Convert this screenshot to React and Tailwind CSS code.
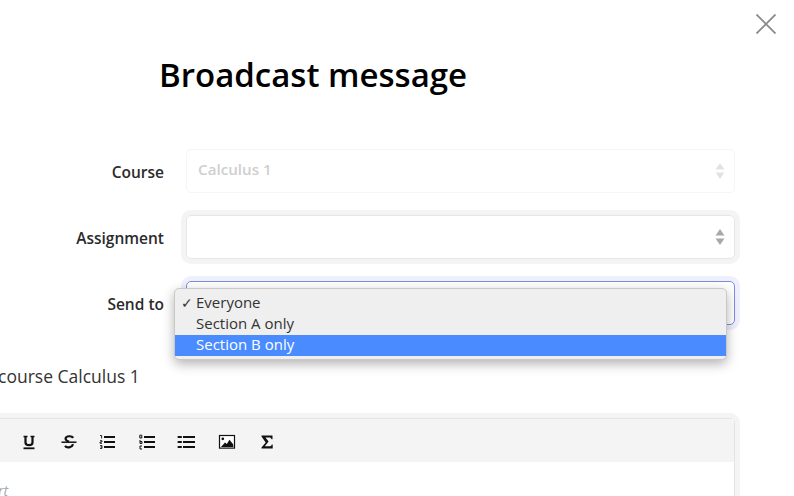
const font = { fontFamily: '"Open Sans", sans-serif' };

function Arrows({ color }) {
  return (
    <svg width="10" height="16" viewBox="0 0 10 16" className={color}>
      <path d="M5 0 L9.5 6.5 H0.5 Z" fill="currentColor" />
      <path d="M5 16 L9.5 9.5 H0.5 Z" fill="currentColor" />
    </svg>
  );
}

function Row({ label, children }) {
  return (
    <div className="flex items-center gap-[22px]">
      <label className="w-[164px] text-right text-[15.5px] font-semibold text-[#2b2b2b] pt-[3px]">{label}</label>
      {children}
    </div>
  );
}

function Toolbar() {
  const cls = 'w-[20px] h-[20px] text-[#111]';
  return (
    <div className="flex items-center h-[43px] bg-[#f4f4f4] pl-[38px] pt-[2px] gap-[19.6px]">
      <svg viewBox="0 0 20 20" className={cls} fill="none" stroke="currentColor">
        <path d="M6.5 4.5 V10.5 C6.5 14 13.5 14 13.5 10.5 V4.5" strokeWidth="2.2" />
        <path d="M4.5 4.5 H8.5 M11.5 4.5 H15.5" strokeWidth="1.3" />
        <path d="M4.5 16.3 H15.5" strokeWidth="1.8" />
      </svg>
      <svg viewBox="0 0 20 20" className={cls} fill="none" stroke="currentColor">
        <path d="M14 6 C13 3.6 7 3.6 6.6 6.5 C6.4 8 8 9 10 9.8" strokeWidth="2.2" />
        <path d="M13.6 12 C14.4 15 8 16.6 6 13.8" strokeWidth="2.2" />
        <path d="M2.5 10.2 H17.5" strokeWidth="1.5" />
      </svg>
      <svg viewBox="0 0 20 20" className={cls} fill="none" stroke="currentColor">
        <path d="M6 5 H17 M6 10 H17 M6 15 H17" strokeWidth="2" />
        <path d="M2 3.5 H3.6 V6.5 M2 8.7 H4 V10 H2 V11.3 H4 M2 13.6 H4 V16.4 H2 M2.6 15 H4" strokeWidth="0.9" />
      </svg>
      <svg viewBox="0 0 20 20" className={cls} fill="none" stroke="currentColor">
        <path d="M6 5 H17 M6 10 H17 M6 15 H17" strokeWidth="2" />
        <path d="M1.8 3.2 H3.8 V6 H1.8 Z M2 8 V11.4 H4 V9.6 H2 M4 14 H2 V17 H4" strokeWidth="1" />
      </svg>
      <svg viewBox="0 0 20 20" className={cls} fill="none" stroke="currentColor">
        <path d="M6 5 H18 M6 10 H18 M6 15 H18" strokeWidth="2" />
        <path d="M1.5 5 H4 M1.5 10 H4 M1.5 15 H4" strokeWidth="2.2" strokeLinecap="round" />
      </svg>
      <svg viewBox="0 0 20 20" className={cls}>
        <rect x="2.5" y="3.5" width="15" height="12.6" fill="#fff" stroke="currentColor" strokeWidth="1.2" />
        <circle cx="5.8" cy="6.8" r="1.4" fill="currentColor" />
        <path d="M4 15 L8 10.5 L9.8 12 L12.5 7.8 L16.3 12.5 V15 Z" fill="currentColor" />
      </svg>
      <svg viewBox="0 0 20 20" className={cls}>
        <path d="M4.5 3.5 H15.5 V7.2 H14.5 C14.2 5.9 13.6 5.4 12 5.4 H8.4 L11.6 9.6 L7.8 14.3 H12.4 C13.8 14.3 14.5 13.7 14.8 12.5 H15.7 V16.5 H4.5 V15.6 L8.7 10.4 L4.5 4.4 Z" fill="currentColor" />
      </svg>
    </div>
  );
}

export default function App() {
  return (
    <div className="relative w-[794px] h-[496px] overflow-hidden bg-white" style={font}>
      <div className="flex justify-end pt-[14px] pr-[18px]">
        <svg width="20" height="20" viewBox="0 0 20 20" stroke="#8a8a8a" strokeWidth="1.8">
          <path d="M0.5 0.5 L19.5 19.5 M19.5 0.5 L0.5 19.5" />
        </svg>
      </div>

      <h1 className="pl-[159px] mt-[18px] text-[33px] leading-[46px] font-semibold text-black">Broadcast message</h1>

      <div className="flex flex-col gap-[22px] mt-[51px]">
        <Row label="Course">
          <div className="flex items-center justify-between w-[549px] h-[44px] pl-[11px] pr-[9px] rounded-[5px] border border-[#f5f5f5]">
            <span className="text-[15.2px] font-semibold text-[#cfcfcf] -mt-[3px]">Calculus 1</span>
            <Arrows color="text-[#e3e3e3]" />
          </div>
        </Row>
        <Row label="Assignment">
          <div className="flex items-center justify-end w-[549px] h-[44px] pr-[9px] rounded-[5px] border border-[#e6e6e6] ring-[5px] ring-[#f4f4f4]">
            <Arrows color="text-[#a8a8a8]" />
          </div>
        </Row>
        <Row label="Send to">
          <div className="w-[549px] h-[44px] rounded-[5px] border border-[#7f8ce0] ring-[5px] ring-[#eef1fb]" />
        </Row>
      </div>

      <p className="mt-[39px] -ml-[2px] text-[17.5px] leading-[24px] text-[#333]">course Calculus 1</p>

      <div className="mt-[30px] w-[755px] -ml-[20px] rounded-t-[5px] border border-b-0 border-[#e4e4e4] ring-[5px] ring-[#f4f4f4]">
        <Toolbar />
        <div className="h-[40px] bg-white pt-[18px] pl-[17px] text-[14px] italic text-[#aaa]">rt</div>
      </div>

      {/* native select menu, open over the Send to field */}
      <ul className="absolute left-[174px] top-[288px] w-[553px] h-[72px] py-[4px] rounded-[5px] bg-[#efefef] border border-[#c9c9c9] shadow-[0_4px_12px_rgba(0,0,0,0.3)] text-[15px] leading-[19px] text-[#333]">
        <li className="relative h-[21px] pl-[21px]">
          <span className="absolute left-[6px] text-[14px]">✓</span>
          Everyone
        </li>
        <li className="h-[21px] pl-[21px]">Section A only</li>
        <li className="h-[21px] pl-[21px] bg-[#4a8cff] text-white">Section B only</li>
      </ul>
    </div>
  );
}
